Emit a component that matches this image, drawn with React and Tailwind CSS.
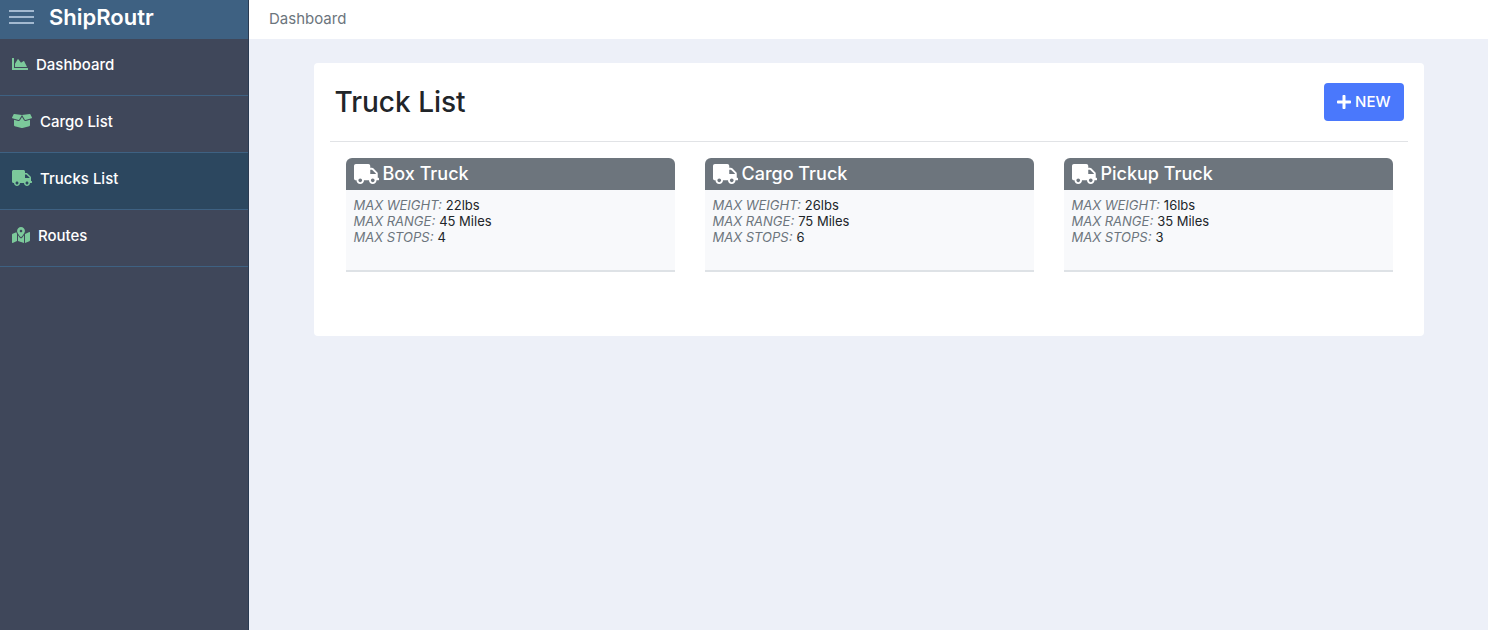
import { FaBoxOpen, FaChartArea, FaMapMarkedAlt, FaPlus, FaTruck } from "react-icons/fa";

const navItems = [
  { label: "Dashboard", Icon: FaChartArea, size: "w-4 h-4" },
  { label: "Cargo List", Icon: FaBoxOpen, size: "w-5 h-4" },
  { label: "Trucks List", Icon: FaTruck, size: "w-5 h-4", active: true },
  { label: "Routes", Icon: FaMapMarkedAlt, size: "w-[18px] h-4" },
];

const trucks = [
  { name: "Box Truck", weight: "22lbs", range: "45 Miles", stops: "4" },
  { name: "Cargo Truck", weight: "26lbs", range: "75 Miles", stops: "6" },
  { name: "Pickup Truck", weight: "16lbs", range: "35 Miles", stops: "3" },
];

function Sidebar() {
  return (
    <aside className="w-[249px] shrink-0 border-r border-[#2a3b52] bg-[#3f475a]">
      <div className="flex h-[39px] items-center bg-[#3e6182] pb-1.5 pl-[9px]">
        <button type="button" aria-label="Toggle menu" className="flex w-[25px] flex-col gap-1">
          <span className="h-0.5 w-full bg-[#a3b9d0]" />
          <span className="h-0.5 w-full bg-[#a3b9d0]" />
          <span className="h-0.5 w-full bg-[#a3b9d0]" />
        </button>
        <a href="#" className="ml-[15px] text-[22px] leading-7 font-semibold text-white">ShipRoutr</a>
      </div>
      <nav>
        {navItems.map(({ label, Icon, size, active }) => (
          <a
            key={label}
            href="#"
            aria-current={active ? "page" : undefined}
            className={`flex items-start gap-2 border-b border-[#3e6182] pt-[13px] pb-[17px] pl-3 text-[15px] leading-[26px] font-medium text-white ${active ? "bg-[#2c475f]" : ""}`}
          >
            <Icon className={`mt-1 text-[#7cc99b] ${size}`} />
            {label}
          </a>
        ))}
      </nav>
    </aside>
  );
}

function Stat({ label, value }) {
  return (
    <div className="flex gap-1">
      <dt className="text-[#6c757d] italic">{label}:</dt>
      <dd className="text-[#212529]">{value}</dd>
    </div>
  );
}

function TruckCard({ truck }) {
  return (
    <article className="rounded-t-md border-b-2 border-[#dee2e6] bg-[#f8f9fb]">
      <h2 className="flex h-8 items-center gap-1 rounded-t-md bg-[#6d757d] px-2 text-lg font-medium text-white">
        <FaTruck className="h-5 w-[25px]" />
        {truck.name}
      </h2>
      <dl className="px-2 pt-[7px] pb-[25px] text-[13px] leading-4">
        <Stat label="MAX WEIGHT" value={truck.weight} />
        <Stat label="MAX RANGE" value={truck.range} />
        <Stat label="MAX STOPS" value={truck.stops} />
      </dl>
    </article>
  );
}

export default function App() {
  return (
    <div className="flex min-h-screen bg-[#edf0f8] font-['Inter','Liberation_Sans',sans-serif]">
      <Sidebar />
      <div className="min-w-0 flex-1">
        <header className="flex h-[39px] items-center bg-white px-5 text-[15px] text-[#6c757d]">
          Dashboard
        </header>
        <main className="px-4 pt-6">
          <section className="mx-auto max-w-[1110px] rounded bg-white px-4 pb-16">
            <div className="flex items-center justify-between border-b border-[#e1e3e6] py-5 pr-1 pl-[5px]">
              <h1 className="text-[28px] leading-[38px] font-medium text-[#212529]">Truck List</h1>
              <button
                type="button"
                className="flex h-[38px] items-center gap-1 rounded bg-[#4a78fc] px-[13px] text-[15px] font-medium text-white"
              >
                <FaPlus className="h-4 w-[14px]" />
                NEW
              </button>
            </div>
            <div className="grid grid-cols-3 gap-[30px] pt-4 pr-[15px] pl-4">
              {trucks.map((truck) => (
                <TruckCard key={truck.name} truck={truck} />
              ))}
            </div>
          </section>
        </main>
      </div>
    </div>
  );
}
